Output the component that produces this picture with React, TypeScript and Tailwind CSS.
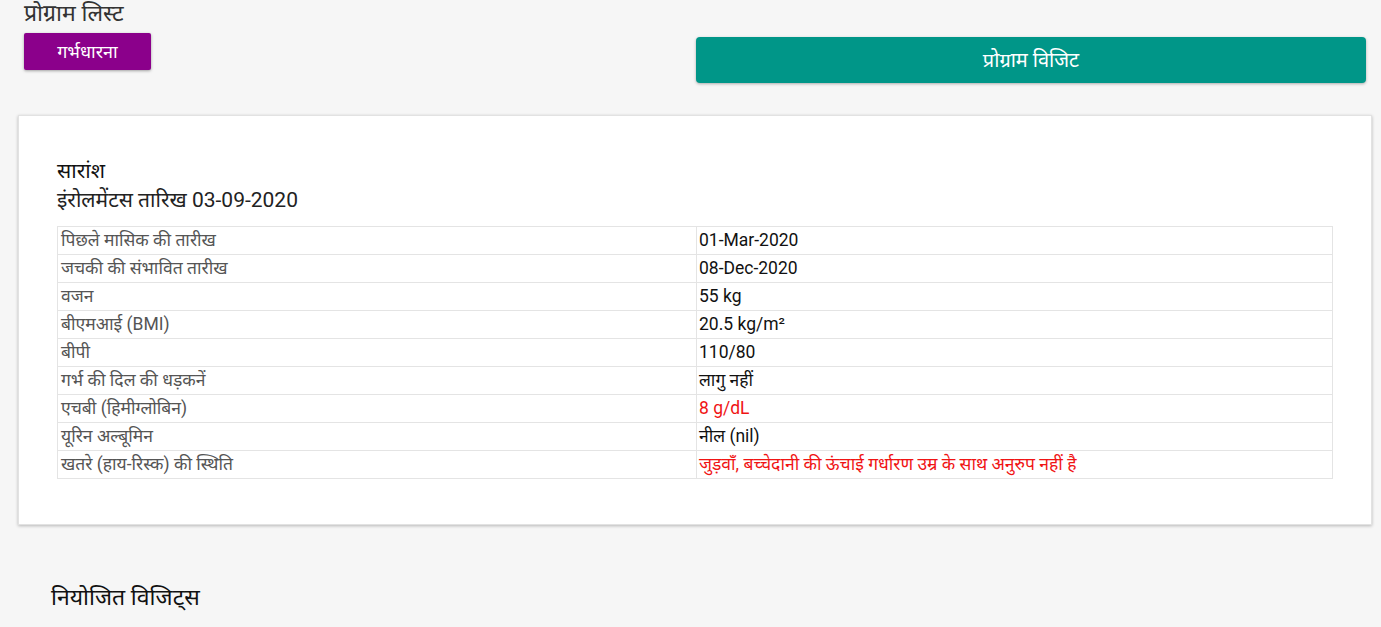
import React from "react";

type Row = { label: string; value: string; red?: boolean };

const rows: Row[] = [
  { label: "पिछले मासिक की तारीख", value: "01-Mar-2020" },
  { label: "जचकी की संभावित तारीख", value: "08-Dec-2020" },
  { label: "वजन", value: "55 kg" },
  { label: "बीएमआई (BMI)", value: "20.5 kg/m²" },
  { label: "बीपी", value: "110/80" },
  { label: "गर्भ की दिल की धड़कनें", value: "लागु नहीं" },
  { label: "एचबी (हिमीग्लोबिन)", value: "8 g/dL", red: true },
  { label: "यूरिन अल्बूमिन", value: "नील (nil)" },
  { label: "खतरे (हाय-रिस्क) की स्थिति", value: "जुड़वाँ, बच्चेदानी की ऊंचाई गर्धारण उम्र के साथ अनुरुप नहीं है", red: true },
];

const App = () => {
  return (
    <div className="min-h-[627px] bg-[#f6f6f6] font-['Roboto','Noto_Sans',sans-serif] text-[#222]">
      {/* header */}
      <div className="flex items-start justify-between pl-6 pr-[15px]">
        <div className="flex flex-col">
          <h1 className="text-[23px] leading-[27px] text-[#333]">प्रोग्राम लिस्ट</h1>
          <button className="mt-[6px] w-[127px] h-[37px] bg-[#8b008b] text-white text-[18px] rounded-[2px] shadow-[0_1px_3px_rgba(0,0,0,0.35)]">
            गर्भधारना
          </button>
        </div>
        <button className="mt-[37px] w-[670px] h-[46px] bg-[#009688] text-white text-[20px] rounded-[4px] shadow-[0_1px_3px_rgba(0,0,0,0.3)]">
          प्रोग्राम विजिट
        </button>
      </div>

      {/* summary card */}
      <div className="ml-[18px] mr-[9px] mt-[32px] h-[410px] bg-white border border-[#e2e2e2] shadow-[0_1px_3px_rgba(0,0,0,0.25)] pt-[41px] px-[38px]">
        <h2 className="text-[21px] leading-[29px] text-[#111]">सारांश</h2>
        <p className="text-[21px] leading-[29px] text-[#222]">इंरोलमेंटस तारिख 03-09-2020</p>
        <table className="mt-[11px] w-full border-collapse border border-[#e4e4e4] text-[17.5px]">
          <tbody>
            {rows.map((r) => (
              <tr key={r.label} className="h-[28px]">
                <td className="w-[639px] border border-[#e4e4e4] px-[3px] py-0 text-[#555] leading-[27px]">{r.label}</td>
                <td className={`border border-[#e4e4e4] px-[2px] py-0 leading-[27px] ${r.red ? "text-[#f01414]" : "text-[#111]"}`}>
                  {r.value}
                </td>
              </tr>
            ))}
          </tbody>
        </table>
      </div>

      <h2 className="mt-[58px] ml-[51px] text-[23px] leading-[30px] text-[#111]">नियोजित विजिट्स</h2>
    </div>
  );
};

export default App;
